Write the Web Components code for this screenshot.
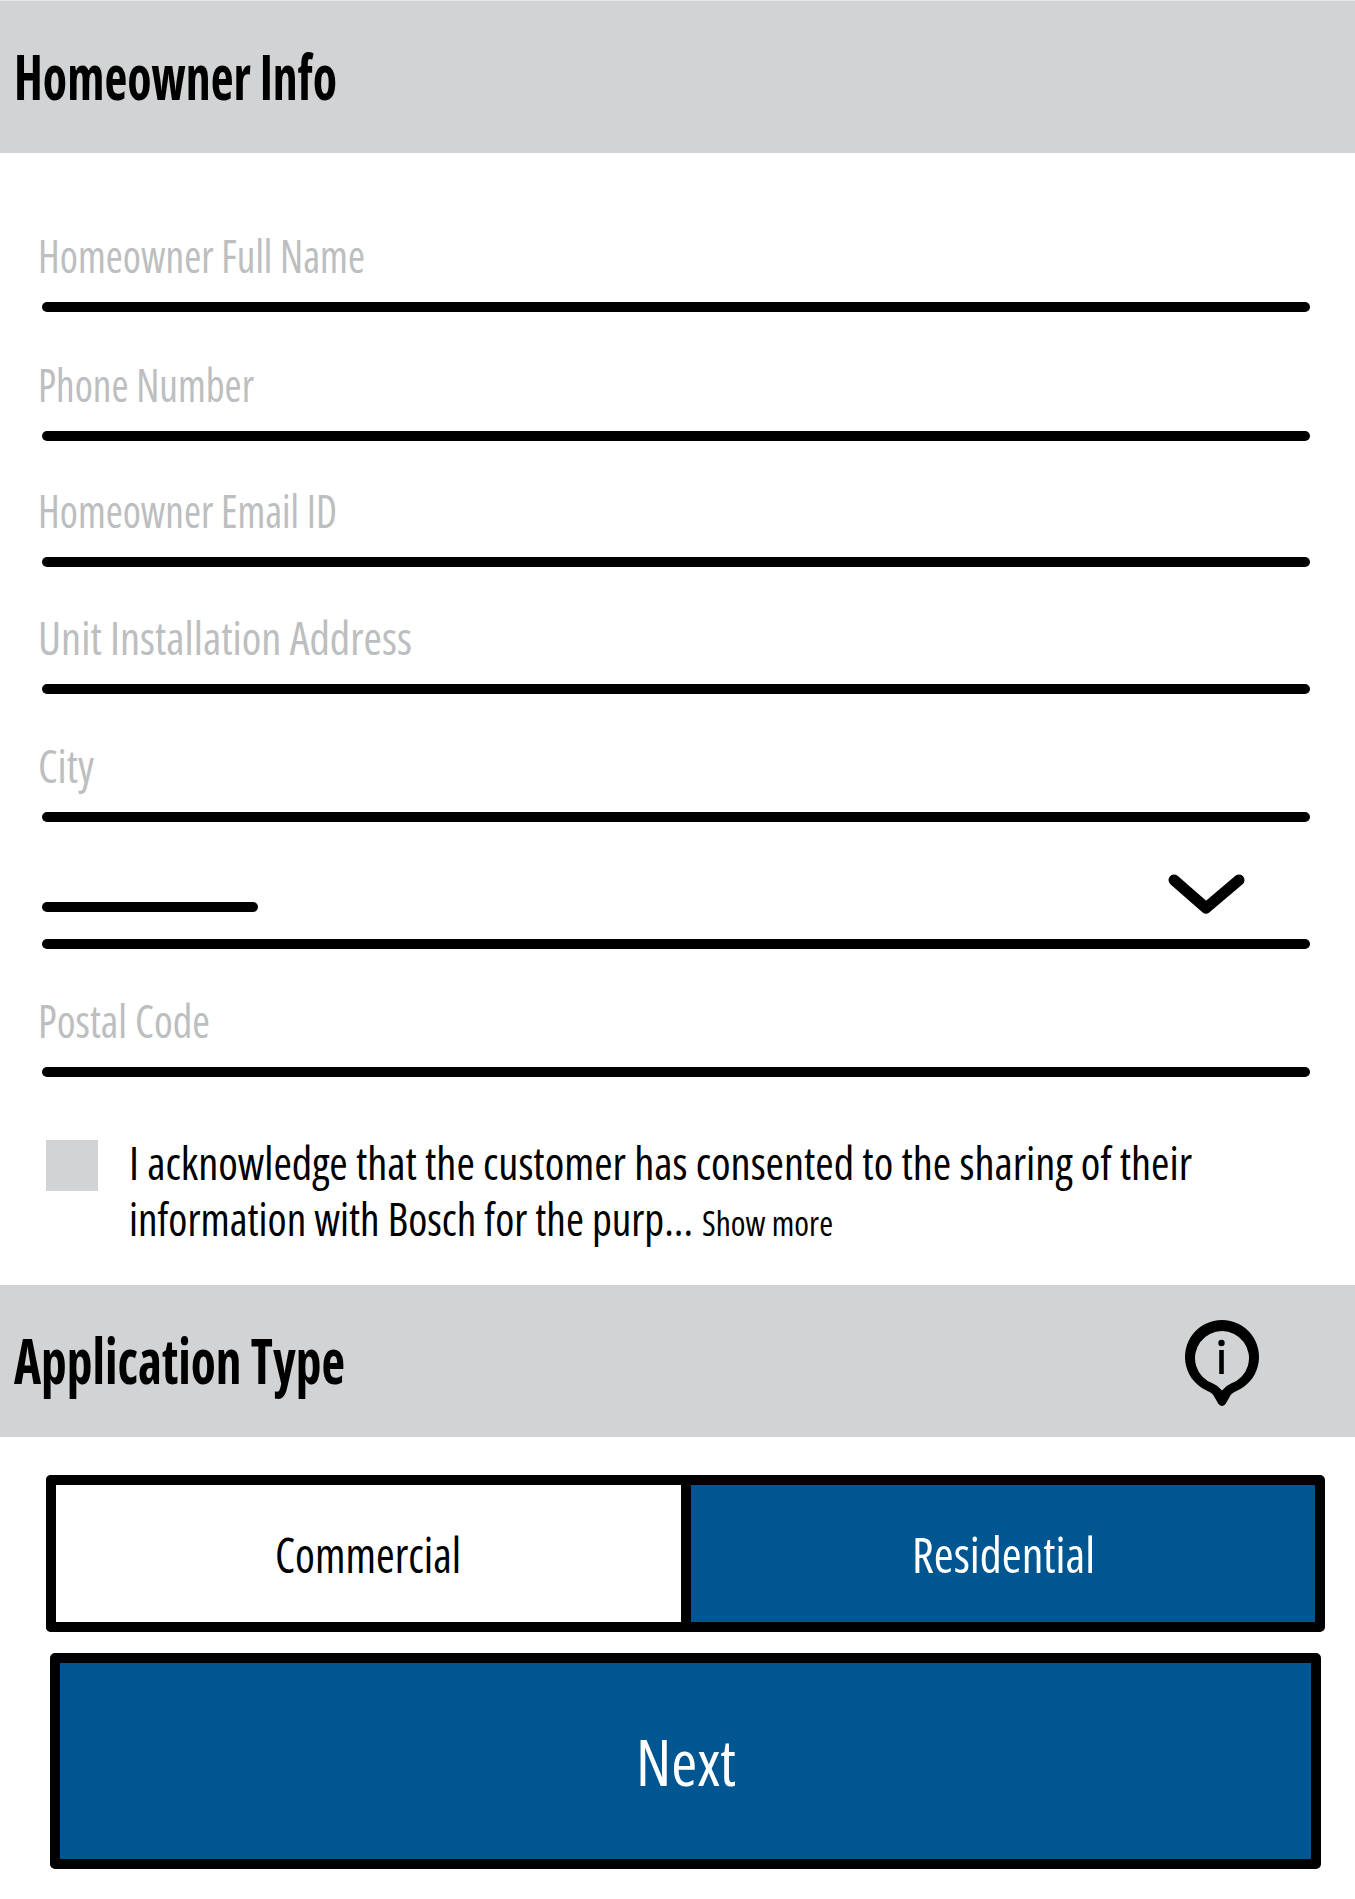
<!DOCTYPE html>
<html>
<head>
<meta charset="utf-8">
<title>Homeowner Info</title>
<style>
  html, body { margin: 0; background: #fff; }
  body { font-family: "Open Sans", "Liberation Sans", sans-serif; color: #000; width: 1355px; }
</style>
</head>
<body>
<homeowner-form></homeowner-form>

<script>
// Open Sans is wider than the face in the screenshot, so texts are squeezed to a given width
class FitText extends HTMLElement {
  constructor() {
    super();
    this.attachShadow({ mode: 'open' });
    this.shadowRoot.innerHTML = `
      <style>
        :host { display: inline-block; white-space: nowrap; transform-origin: 0 50%; font-stretch: 75%; }
      </style>
      <slot></slot>
    `;
  }

  connectedCallback() {
    const target = Number(this.getAttribute('width'));
    const natural = this.getBoundingClientRect().width;
    this.style.width = target + 'px';
    this.style.transform = `scaleX(${target / natural})`;
  }
}

class SectionHeader extends HTMLElement {
  constructor() {
    super();
    this.attachShadow({ mode: 'open' });
    this.shadowRoot.innerHTML = `
      <style>
        :host {
          display: flex;
          align-items: center;
          justify-content: space-between;
          box-sizing: border-box;
          height: 152px;
          padding-left: 14px;
          background: #d1d3d4;
          font-size: 63px;
          font-weight: 700;
        }
        .title { line-height: 150px; height: 152px; }
        ::slotted([slot="icon"]) { margin: 6px 92px 0 0; }
      </style>
      <div class="title"><slot></slot></div>
      <slot name="icon"></slot>
    `;
  }
}

class FormField extends HTMLElement {
  constructor() {
    super();
    this.attachShadow({ mode: 'open' });
    this.shadowRoot.innerHTML = `
      <style>
        :host {
          display: flex;
          flex-direction: column;
          justify-content: flex-end;
          height: 127px;
          font-size: 45px;
          color: #bcbec0;
        }
        .value { display: block; height: 62px; padding-left: 38px; line-height: 62px; }
        .bar { height: 10px; margin: 15px 45px 0 42px; border-radius: 5px; background: #000; }
      </style>
      <div class="value"><slot></slot></div>
      <div class="bar"></div>
    `;
  }
}

class SelectField extends HTMLElement {
  constructor() {
    super();
    this.attachShadow({ mode: 'open' });
    this.shadowRoot.innerHTML = `
      <style>
        :host {
          display: flex;
          flex-direction: column;
          justify-content: flex-end;
          height: 127px;
        }
        .value {
          display: flex;
          align-items: center;
          justify-content: space-between;
          height: 48px;
          margin: 0 109px 20px 42px;
        }
        .short { width: 216px; height: 10px; margin-top: 24px; border-radius: 5px; background: #000; }
        svg { display: block; }
        .bar { height: 10px; margin: 0 45px 0 42px; border-radius: 5px; background: #000; }
      </style>
      <div class="value">
        <div class="short"></div>
        <svg width="78" height="42" viewBox="1168 873 78 42" fill="none" stroke="#000" stroke-width="11" stroke-linecap="round" stroke-linejoin="round">
          <polyline points="1174,879 1206,907 1239,879"/>
        </svg>
      </div>
      <div class="bar"></div>
    `;
  }
}

class ConsentRow extends HTMLElement {
  constructor() {
    super();
    this.attachShadow({ mode: 'open' });
    this.shadowRoot.innerHTML = `
      <style>
        :host {
          display: flex;
          gap: 31px;
          padding: 57px 0 34px 46px;
          font-size: 46px;
          line-height: 56px;
        }
        .box { flex: none; width: 52px; height: 51px; margin-top: 6px; background: #d1d3d4; }
        .more { font-size: 35px; margin-left: 9px; }
        .line { display: flex; align-items: baseline; }
      </style>
      <div class="box"></div>
      <div>
        <div class="line"><slot name="first"></slot></div>
        <div class="line"><slot name="second"></slot><span class="more"><slot name="more"></slot></span></div>
      </div>
    `;
  }
}

class SegmentPicker extends HTMLElement {
  constructor() {
    super();
    this.attachShadow({ mode: 'open' });
    this.shadowRoot.innerHTML = `
      <style>
        :host {
          display: grid;
          grid-template-columns: 635px 644px;
          height: 157px;
          margin: 38px 0 21px 46px;
          font-size: 50px;
        }
        div {
          display: flex;
          align-items: center;
          justify-content: center;
          border: 10px solid #000;
        }
        .left { border-right: 0; border-radius: 5px 0 0 5px; background: #fff; color: #000; padding-right: 2px; }
        .right { border-radius: 0 5px 5px 0; background: #005691; color: #fff; }
      </style>
      <div class="left"><slot name="left"></slot></div>
      <div class="right"><slot name="right"></slot></div>
    `;
  }
}

class NextButton extends HTMLElement {
  constructor() {
    super();
    this.attachShadow({ mode: 'open' });
    this.shadowRoot.innerHTML = `
      <style>
        :host {
          display: flex;
          align-items: center;
          justify-content: center;
          box-sizing: border-box;
          width: 1271px;
          height: 216px;
          margin-left: 50px;
          border: 10px solid #000;
          border-radius: 5px;
          background: #005691;
          color: #fff;
          font-size: 64px;
        }
      </style>
      <slot></slot>
    `;
  }
}

const formTemplate = document.createElement('template');
formTemplate.innerHTML = `
  <style>
    :host { display: block; border-top: 1px solid #e6e7e8; }
    .fields { padding-top: 31px; }
  </style>
  <section-header><fit-text width="323">Homeowner Info</fit-text></section-header>
  <div class="fields">
    <form-field style="height:128px"><fit-text width="327">Homeowner Full Name</fit-text></form-field>
    <form-field style="height:129px"><fit-text width="216">Phone Number</fit-text></form-field>
    <form-field style="height:126px"><fit-text width="299">Homeowner Email ID</fit-text></form-field>
    <form-field><fit-text width="374">Unit Installation Address</fit-text></form-field>
    <form-field style="height:128px"><fit-text width="56">City</fit-text></form-field>
    <select-field></select-field>
    <form-field style="height:128px"><fit-text width="172">Postal Code</fit-text></form-field>
  </div>
  <consent-row>
    <fit-text slot="first" width="1063">I acknowledge that the customer has consented to the sharing of their</fit-text>
    <fit-text slot="second" width="564">information with Bosch for the purp...</fit-text>
    <fit-text slot="more" width="131">Show more</fit-text>
  </consent-row>
  <section-header>
    <fit-text width="331">Application Type</fit-text>
    <svg slot="icon" width="80" height="90" viewBox="1183 1319 80 90">
      <path fill="#000" fill-rule="evenodd" d="M1207.5 1391 A37 37 0 1 1 1236.5 1391 Q1231 1393 1229 1398 L1225.5 1404 Q1222 1408 1218.5 1404 L1215 1398 Q1213 1393 1207.5 1391 Z M1213 1383.5 A27 27 0 1 1 1231 1383.5 Q1226 1385.5 1222 1390.5 Q1218 1385.5 1213 1383.5 Z"/>
      <circle cx="1221.5" cy="1343" r="3.2" fill="#000"/>
      <rect x="1219.2" y="1350" width="4.6" height="24" fill="#000"/>
    </svg>
  </section-header>
  <segment-picker>
    <fit-text slot="left" width="186">Commercial</fit-text>
    <fit-text slot="right" width="183">Residential</fit-text>
  </segment-picker>
  <next-button><fit-text width="100">Next</fit-text></next-button>
`;

class HomeownerForm extends HTMLElement {
  constructor() {
    super();
    this.attachShadow({ mode: 'open' });
    this.shadowRoot.appendChild(formTemplate.content.cloneNode(true));
  }
}

customElements.define('section-header', SectionHeader);
customElements.define('form-field', FormField);
customElements.define('select-field', SelectField);
customElements.define('consent-row', ConsentRow);
customElements.define('segment-picker', SegmentPicker);
customElements.define('next-button', NextButton);
customElements.define('homeowner-form', HomeownerForm);
// last, so every parent already has its shadow styles when the text is measured
customElements.define('fit-text', FitText);
</script>
</body>
</html>
